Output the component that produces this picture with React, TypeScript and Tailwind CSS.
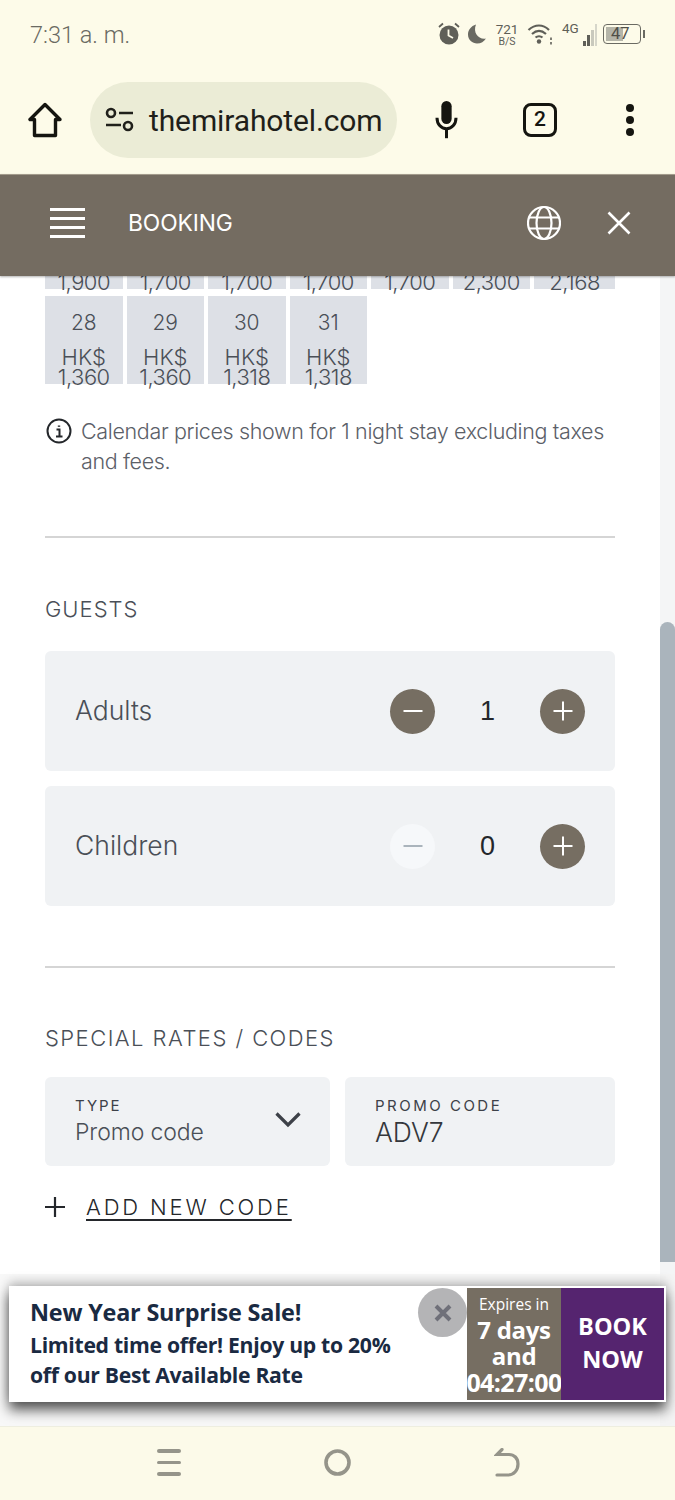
import React from "react";

const grot = "font-['Inter',sans-serif]";

function Cell({ day, price }: { day: string; price: string }) {
  return (
    <div className="h-[88px] bg-[#dde0e6] flex flex-col items-center text-[#4a4f57]">
      <div className="mt-[14px] text-[21px] leading-[25px] font-light">{day}</div>
      <div className="mt-[12px] text-[22px] leading-[20px] font-light">HK$</div>
      <div className="text-[22px] leading-[18px] font-light tracking-[-0.5px] mt-[1px]">{price}</div>
    </div>
  );
}

function Round({ kind, faded }: { kind: "minus" | "plus"; faded?: boolean }) {
  return (
    <div className={`w-[45px] h-[45px] rounded-full flex items-center justify-center ${faded ? "bg-[#f6f8fa]" : "bg-[#766e62]"}`}>
      <svg width="20" height="20" viewBox="0 0 20 20" fill="none" stroke={faded ? "#aab4bc" : "#ffffff"} strokeWidth="2">
        <path d="M0.5 10H19.5" />
        {kind === "plus" && <path d="M10 0.5V19.5" />}
      </svg>
    </div>
  );
}

function GuestRow({ label, value, faded }: { label: string; value: string; faded?: boolean }) {
  return (
    <div className="h-[120px] bg-[#f0f2f4] rounded-[6px] pl-[30px] pr-[30px] flex items-center">
      <div className="flex-1 text-[26.5px] leading-[36px] mb-[2px] font-light text-[#4a4f57]">{label}</div>
      <Round kind="minus" faded={faded} />
      <div className="w-[105px] text-center text-[27px] text-[#24272b] font-['Liberation_Sans',sans-serif]">{value}</div>
      <Round kind="plus" />
    </div>
  );
}

export default function App() {
  return (
    <div className={`relative w-[675px] h-[1500px] overflow-hidden bg-white flex flex-col ${grot}`}>
      {/* Browser chrome */}
      <div className="h-[174px] bg-[#fdfbe9] shrink-0 flex flex-col font-['Roboto',sans-serif]">
        <div className="h-[68px] pl-[30px] pr-[30px] flex items-center justify-between">
          <div className="pt-[3px] text-[23.5px] text-[#6a6a62] font-light">7:31 a. m.</div>
          <div className="flex items-center text-[#5f5f58]">
            <svg width="24" height="24" viewBox="0 0 24 24" className="mr-[2px]" fill="#5f5f58">
              <circle cx="12" cy="13" r="9.5" />
              <path d="M11.5 7.5V13.5L16 16" stroke="#fdfbe9" strokeWidth="1.8" fill="none" />
              <path d="M2 5L6 1.5M22 5L18 1.5" stroke="#5f5f58" strokeWidth="1.8" />
            </svg>
            <svg width="22" height="24" viewBox="0 0 22 24" className="ml-[3px]" fill="#6a6a62">
              <path d="M10 2.5C5 4 2 8 2 12.5C2 18 6.5 21.5 11 21.5C15 21.5 18 19.5 20 16.5C13 18 6.5 11 10 2.5Z" />
            </svg>
            <div className="ml-[8px] w-[22px] flex flex-col items-center leading-none">
              <span className="text-[13.5px] leading-[14px]">721</span>
              <span className="text-[10.5px] leading-[11px]">B/S</span>
            </div>
            <svg width="26" height="24" viewBox="0 0 26 24" className="ml-[9px]" fill="none" stroke="#5f5f58" strokeWidth="2.2">
              <path d="M1.5 8C8 2 16 2 22 8M5 12C9.5 8 14.5 8 19 12M8.5 15.5C10.5 13.8 13.5 13.8 15.5 15.5" />
              <circle cx="12" cy="19.5" r="2.2" fill="#5f5f58" stroke="none" />
              <path d="M24 15.5V18M24 20V22.5" strokeWidth="1.6" />
            </svg>
            <div className="ml-[9px] relative w-[35px] h-[26px]">
              <span className="absolute left-0 top-0 text-[13.5px] leading-[14px]">4G</span>
              <svg width="35" height="26" viewBox="0 0 35 26" className="block">
                <rect x="21" y="20" width="3" height="5" fill="#5f5f58" />
                <rect x="25" y="14" width="3" height="11" fill="#5f5f58" />
                <rect x="29" y="9" width="3" height="16" fill="#c9c9bd" />
                <rect x="33" y="3" width="2.5" height="22" fill="#d6d6ca" />
              </svg>
            </div>
            <div className="ml-[6px] w-[38px] h-[20px] rounded-[4px] border-[1.5px] border-[#6a6a62] relative flex items-center overflow-hidden">
              <div className="absolute left-[2px] top-[2px] bottom-[2px] w-[17px] bg-[#b5b5a9]" />
              <span className="relative w-full pl-[7px] text-[16.5px] leading-none text-[#4f4f48]">47</span>
            </div>
            <div className="ml-[2px] w-[2px] h-[8px] bg-[#6a6a62]" />
          </div>
        </div>
        <div className="flex items-center pl-[28px] pr-[41px] h-[76px] mt-[14px]">
          <svg width="34" height="36" viewBox="0 0 34 36" fill="none" stroke="#151510" strokeWidth="3.4" strokeLinejoin="round" className="shrink-0">
            <path d="M17 2.5L2 17.5H6.5V33.5H27.5V17.5H32L17 2.5Z" />
          </svg>
          <div className="ml-[28px] w-[307px] h-[76px] rounded-full bg-[#ebecd6] flex items-center pl-[15px] shrink-0">
            <svg width="30" height="28" viewBox="0 0 30 28" fill="none" stroke="#20201b" strokeWidth="2.6" className="shrink-0">
              <circle cx="6" cy="7" r="4" />
              <path d="M14 7H28M1 19H16" />
              <circle cx="23" cy="20" r="4" />
            </svg>
            <span className="ml-[14px] text-[30px] text-[#1f1f1a] tracking-[-0.12px] whitespace-nowrap">themirahotel.com</span>
          </div>
          <svg width="27" height="38" viewBox="0 0 28 48" fill="#151510" className="ml-[36px] shrink-0">
            <rect x="7.5" y="0" width="13" height="29" rx="6.5" />
            <path d="M2 21C2 29 7 35 14 35C21 35 26 29 26 21" fill="none" stroke="#151510" strokeWidth="3.8" />
            <path d="M14 35V47" stroke="#151510" strokeWidth="3.8" />
          </svg>
          <div className="ml-[63px] w-[34px] h-[34px] rounded-[8px] border-[3.2px] border-[#151510] flex items-center justify-center text-[21px] font-medium text-[#151510] shrink-0">2</div>
          <div className="ml-[auto] flex flex-col gap-[4px]">
            <div className="w-[8px] h-[8px] rounded-full bg-[#151510]" />
            <div className="w-[8px] h-[8px] rounded-full bg-[#151510]" />
            <div className="w-[8px] h-[8px] rounded-full bg-[#151510]" />
          </div>
        </div>
      </div>

      {/* Site header */}
      <div className="h-[102px] bg-[#746c61] shrink-0 flex items-center pl-[50px] pr-[44px] pb-[5px] border-t border-[#a39b8c] shadow-[0_1px_2px_rgba(0,0,0,0.3)] relative z-10">
        <div className="w-[35px] flex flex-col gap-[6.5px]">
          <div className="h-[2.5px] bg-white" />
          <div className="h-[2.5px] bg-white" />
          <div className="h-[2.5px] bg-white" />
          <div className="h-[2.5px] bg-white" />
        </div>
        <div className="ml-[43px] text-[22.8px] text-white font-normal tracking-[-0.1px] flex-1">BOOKING</div>
        <svg width="34" height="44" viewBox="0 0 34 44" fill="none" stroke="#ffffff" strokeWidth="2.2">
          <circle cx="17" cy="22" r="16" />
          <ellipse cx="17" cy="22" rx="7.5" ry="16" />
          <path d="M2 16.5H32M2 27.5H32" />
        </svg>
        <svg width="24" height="24" viewBox="0 0 24 24" fill="none" stroke="#ffffff" strokeWidth="2.6" className="ml-[46px]">
          <path d="M1.5 1.5L22.5 22.5M22.5 1.5L1.5 22.5" />
        </svg>
      </div>

      {/* Scrolling content */}
      <div className="flex-1 relative overflow-hidden pl-[45px] pr-[60px]">
        <div className="grid grid-cols-[repeat(6,77.5px)_81px] gap-x-[4px] h-[13px]">
          {["1,900", "1,700", "1,700", "1,700", "1,700", "2,300", "2,168"].map((p, i) => (
            <div key={i} className="h-[13px] bg-[#dde0e6] flex items-end justify-center text-[22px] leading-[18px] font-light text-[#4a4f57] tracking-[-0.5px]">
              <span className="h-[18px] mb-[-2px] block">{p}</span>
            </div>
          ))}
        </div>
        <div className="grid grid-cols-[repeat(6,77.5px)_81px] gap-x-[4px] mt-[7px]">
          <Cell day="28" price="1,360" />
          <Cell day="29" price="1,360" />
          <Cell day="30" price="1,318" />
          <Cell day="31" price="1,318" />
        </div>

        <div className="mt-[32px] flex">
          <svg width="26" height="26" viewBox="0 0 26 26" fill="none" stroke="#24272b" strokeWidth="2" className="shrink-0 mt-[2px] ml-[1px]">
            <circle cx="13" cy="13" r="11.5" />
            <path d="M13 7.5V8.8" strokeWidth="2.4" />
            <path d="M10.5 11.5H13.5V18.5M10 18.5H16.5" />
          </svg>
          <p className="ml-[9px] text-[21.5px] leading-[30px] font-light text-[#5b6068] tracking-[-0.35px]">
            Calendar prices shown for 1 night stay excluding taxes and fees.
          </p>
        </div>

        <div className="mt-[60px] h-[2px] bg-[#d5d5d5]" />

        <div className="mt-[57px] text-[22px] leading-[28px] font-light text-[#4a4f57] tracking-[1px]">GUESTS</div>
        <div className="mt-[28px] flex flex-col gap-[15px]">
          <GuestRow label="Adults" value="1" />
          <GuestRow label="Children" value="0" faded />
        </div>

        <div className="mt-[60px] h-[2px] bg-[#d5d5d5]" />

        <div className="mt-[56px] text-[22px] leading-[28px] font-light text-[#4a4f57] tracking-[1.45px] whitespace-nowrap">SPECIAL RATES / CODES</div>
        <div className="mt-[25px] flex gap-[15px]">
          <div className="w-[285px] h-[89px] rounded-[6px] bg-[#f0f2f4] pl-[30px] pr-[29px] flex items-center">
            <div className="flex-1">
              <div className="text-[15px] leading-[18px] tracking-[1.9px] text-[#3d4148] mt-[1px]">TYPE</div>
              <div className="text-[23px] leading-[30px] mt-[1.5px] font-light text-[#4a4f57] tracking-[-0.1px]">Promo code</div>
            </div>
            <svg width="26" height="16" viewBox="0 0 26 16" fill="none" stroke="#3d4148" strokeWidth="3.2" className="mb-[3px]">
              <path d="M1.5 1.5L13 13L24.5 1.5" />
            </svg>
          </div>
          <div className="w-[270px] h-[89px] rounded-[6px] bg-[#f0f2f4] pl-[30px] flex items-center">
            <div>
              <div className="text-[15px] leading-[18px] tracking-[2.5px] text-[#3d4148] mt-[1px]">PROMO CODE</div>
              <div className="text-[26.5px] leading-[30px] mt-[1.5px] font-light text-[#34373c]">ADV7</div>
            </div>
          </div>
        </div>
        <div className="mt-[26px] flex items-center">
          <svg width="20" height="20" viewBox="0 0 20 20" fill="none" stroke="#24272b" strokeWidth="2.2">
            <path d="M0 10H20M10 0V20" />
          </svg>
          <span className="ml-[21px] text-[22px] leading-[30px] font-light text-[#24272b] tracking-[2.85px] underline underline-offset-[4px] decoration-[2px]">ADD NEW CODE</span>
        </div>

        {/* Scrollbar */}
        <div className="absolute right-0 top-0 bottom-0 w-[15px] bg-[#f4f5f6]">
          <div className="mt-[346px] h-[640px] bg-[#aab4bc] rounded-t-[8px]" />
        </div>

        {/* Fade under the banner */}
        <div className="absolute left-0 right-0 bottom-0 h-[152px] bg-[#f4f4f4]/60" />

        {/* Promo banner */}
        <div className="absolute left-[9px] bottom-[24px] w-[657px] h-[116px] bg-white border-2 border-white shadow-[0_8px_12px_rgba(0,0,0,0.65),0_-4px_10px_rgba(0,0,0,0.22)] flex font-['Open_Sans',sans-serif] text-[#1a2a42]">
          <div className="flex-1 pl-[19px] pt-[8px] font-bold">
            <div className="text-[23.4px] leading-[34px] tracking-[-0.2px] mt-[-1px]">New Year Surprise Sale!</div>
            <div className="text-[21.2px] leading-[30px] mt-[1px] w-[380px] tracking-[-0.3px]">Limited time offer! Enjoy up to 20% off our Best Available Rate</div>
          </div>
          <div className="w-[49px] h-[49px] rounded-full bg-[#b4b4b6] flex items-center justify-center shrink-0">
            <svg width="18" height="18" viewBox="0 0 18 18" fill="none" stroke="#6f7079" strokeWidth="4">
              <path d="M2 2L16 16M16 2L2 16" />
            </svg>
          </div>
          <div className="w-[94px] shrink-0 bg-[#766e62] text-white text-center font-bold overflow-hidden whitespace-nowrap flex flex-col items-center">
            <div className="text-[15.5px] leading-[26px] font-normal mt-[3px]">Expires in</div>
            <div className="text-[24px] leading-[27px] tracking-[-0.3px] mt-[-1px]">7 days</div>
            <div className="text-[24px] leading-[26px] tracking-[-0.3px]">and</div>
            <div className="text-[25px] leading-[27px] tracking-[-0.6px]">04:27:00</div>
          </div>
          <div className="w-[103px] shrink-0 bg-[#55246f] text-white text-center font-bold text-[23.5px] leading-[33px] pt-[22px]">
            BOOK<br />NOW
          </div>
        </div>
      </div>

      {/* Android nav */}
      <div className="h-[74px] bg-[#fcfae9] shrink-0 border-t border-[#eeeee0] flex items-center pb-[2px] relative z-10 font-['Roboto',sans-serif]">
        <div className="ml-[157px] w-[24px] flex flex-col gap-[8px]">
          <div className="h-[3.5px] rounded-full bg-[#95948a]" />
          <div className="h-[3.5px] rounded-full bg-[#95948a]" />
          <div className="h-[3.5px] rounded-full bg-[#95948a]" />
        </div>
        <svg width="27" height="27" viewBox="0 0 27 27" fill="none" stroke="#95948a" strokeWidth="3.6" className="ml-[143px]">
          <circle cx="13.5" cy="13.5" r="11.5" />
        </svg>
        <svg width="26" height="30" viewBox="0 0 26 30" fill="none" stroke="#95948a" strokeWidth="3.2" strokeLinecap="round" className="ml-[143px]">
          <path d="M8 1.5L3 6.5H15C20 6.5 24 10 24 16C24 22 20 27 14 27H3" />
        </svg>
      </div>
    </div>
  );
}
